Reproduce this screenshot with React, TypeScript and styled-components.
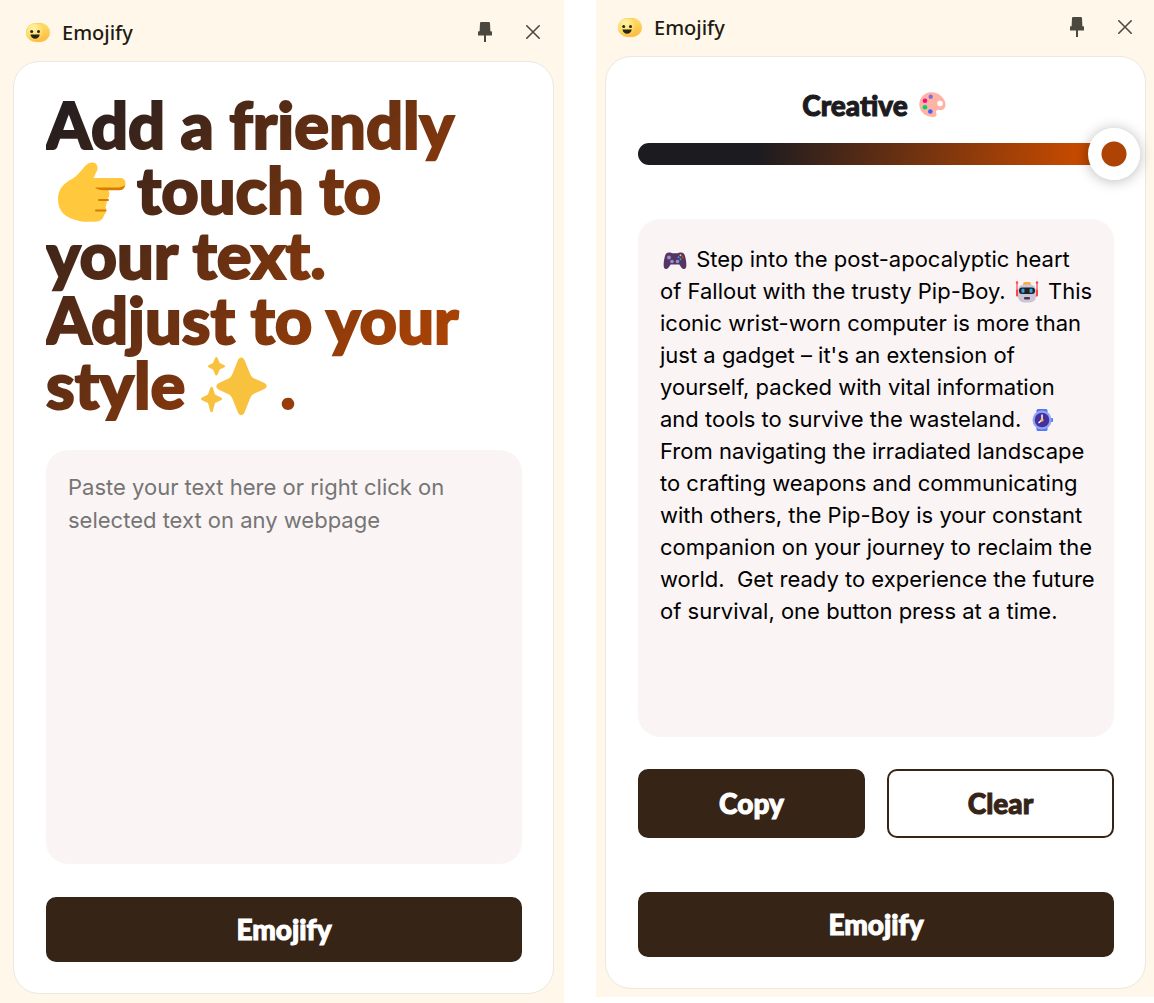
import React, { useState } from "react";
import styled, { createGlobalStyle } from "styled-components";

const display = `Lato, "Open Sans", sans-serif`;
const body = `Inter, "Liberation Sans", sans-serif`;
const chrome = `"Noto Sans", "Open Sans", sans-serif`;

const GlobalStyle = createGlobalStyle`
  *, *::before, *::after { box-sizing: border-box; }
  body { margin: 0; background: #ffffff; }
`;

const Page = styled.main`
  display: grid;
  grid-template-columns: 564fr 558fr;
  gap: 32px;
  min-height: 100vh;
`;

const Panel = styled.section<{ $side: "left" | "right" }>`
  display: flex;
  flex-direction: column;
  min-width: 0;
  background: #fff8ea;
  padding: ${(p) => (p.$side === "left" ? "5px 10px 9px 13px" : "0 8px 8px 9px")};
  margin-bottom: ${(p) => (p.$side === "left" ? "0" : "6px")};
`;

const Header = styled.header`
  display: flex;
  align-items: center;
  height: 56px;
  padding: 0 9px 0 13px;
`;

const AppName = styled.h2`
  flex: 1;
  margin: 0 0 0 12px;
  font: 500 20px/28px ${chrome};
  color: #1e1c12;
`;

const IconButton = styled.button`
  display: flex;
  align-items: center;
  justify-content: center;
  width: 24px;
  height: 28px;
  margin-left: 24px;
  padding: 0 0 2px;
  border: 0;
  background: none;
  cursor: pointer;
`;

const Card = styled.div`
  flex: 1;
  display: flex;
  flex-direction: column;
  padding: 32px 31px 31px 32px;
  border: 1px solid #ece8df;
  border-radius: 26px;
  background: #ffffff;
`;

const Headline = styled.h1`
  margin: -2px 0 29px;
  padding-bottom: 4px;
  font: 900 65px/65px ${display};
  color: transparent;
  background: linear-gradient(135deg, #1e1c20 0%, #c64a00 96%);
  background-clip: text;
  -webkit-background-clip: text;
  -webkit-text-stroke: 2px transparent;
`;

const HandIcon = styled.svg`
  width: 68px;
  height: 60px;
  margin: 0 11px 0 12px;
  vertical-align: -8px;
`;

const SparkleIcon = styled.svg`
  width: 66px;
  height: 59px;
  margin: 0 13px 0 16px;
  vertical-align: -7px;
`;

const TextInput = styled.textarea`
  flex: 1;
  display: block;
  width: 100%;
  min-height: 240px;
  padding: 21px 22px;
  border: 0;
  border-radius: 22px;
  background: #faf4f4;
  font: 400 22px/33px ${body};
  color: #000000;
  resize: none;
  &::placeholder { color: #757575; opacity: 1; }
`;

const Result = styled.output`
  flex: 1;
  display: block;
  margin-top: 54px;
  padding: 24px 18px 24px 22px;
  border-radius: 22px;
  background: #faf4f4;
  font: 400 22px/32px ${body};
  color: #000000;
  white-space: pre-wrap;
`;

const InlineIcon = styled.svg`
  width: 30px;
  height: 24px;
  vertical-align: -5px;
`;

const Button = styled.button<{ $outline?: boolean; $tall?: boolean }>`
  height: ${(p) => (p.$tall ? 69 : 65)}px;
  flex: ${(p) => (p.$tall ? "1 1 0" : "none")};
  padding: 0 16px 2px;
  border: 2px solid #362417;
  border-radius: 10px;
  background: ${(p) => (p.$outline ? "#ffffff" : "#362417")};
  color: ${(p) => (p.$outline ? "#362417" : "#ffffff")};
  font: 900 28px/32px ${display};
  -webkit-text-stroke: 1px currentColor;
  cursor: pointer;
`;

const Submit = styled(Button)<{ $gap: number }>`
  margin-top: ${(p) => p.$gap}px;
`;

const Actions = styled.div`
  display: flex;
  gap: 22px;
  margin-top: 32px;
`;

const ToneLabel = styled.label`
  display: flex;
  align-items: center;
  justify-content: center;
  gap: 11px;
  height: 34px;
  padding: 0 4px 2px 0;
  font: 900 28px/32px ${display};
  -webkit-text-stroke: 1px currentColor;
  color: #1c1b20;
`;

const Track = styled.div`
  display: flex;
  align-items: center;
  height: 22px;
  margin-top: 20px;
  border-radius: 11px;
  background: linear-gradient(98deg, #1c1b20 25%, #c64a00 92%, #a84204 97%);
`;

const Slider = styled.input`
  appearance: none;
  flex: none;
  width: calc(100% + 52px);
  height: 52px;
  margin: -15px -26px;
  background: transparent;
  cursor: pointer;
  &::-webkit-slider-thumb {
    appearance: none;
    width: 52px;
    height: 52px;
    border-radius: 50%;
    background: radial-gradient(circle, #ad4305 12px, #ad4305 12px, #ffffff 13px);
    box-shadow: 0 1px 14px rgba(0, 0, 0, 0.28);
  }
`;

function Logo() {
  return (
    <svg width="24" height="20" viewBox="0 0 24 20" aria-hidden="true">
      <defs>
        <radialGradient id="face" cx="0.4" cy="0.25" r="0.8">
          <stop offset="0" stopColor="#fff3a6" />
          <stop offset="0.6" stopColor="#ffdc63" />
          <stop offset="1" stopColor="#fdb43b" />
        </radialGradient>
      </defs>
      {[14.5, 12.8, 11.1, 9.4].map((cx) => (
        <circle key={cx} cx={cx} cy="9.5" r="9.3" fill="url(#face)" stroke="#f8c64d" strokeWidth="0.4" />
      ))}
      <circle cx="5.700" cy="8.500" r="1.500" fill="#26251b" />
      <circle cx="12.500" cy="8.500" r="1.500" fill="#26251b" />
      <path d="M4.500 11.500H13.700C13.500 14 11.500 15.800 9.100 15.800S4.700 14 4.500 11.500z" fill="#26251b" />
    </svg>
  );
}

function TitleBar() {
  return (
    <Header>
      <Logo />
      <AppName>Emojify</AppName>
      <IconButton aria-label="Pin">
        <svg width="14" height="20" viewBox="0 0 14 20" fill="#4b493f">
          <path d="M3.2 0h7.6c.7 0 1.100.4 1.200 1.100L12.400 9.300H13c.6 0 1 .4 1 1V13.500H8V20H6V13.500H0v-3.200c0-.6.4-1 1-1h.6L2 1.100C2.100.4 2.500 0 3.200 0z" />
        </svg>
      </IconButton>
      <IconButton aria-label="Close">
        <svg width="14" height="14" viewBox="0 0 14 14" stroke="#4b493f" strokeWidth="1.6" strokeLinecap="round">
          <path d="M.8.8l12.400 12.400M13.200.8L.8 13.200" />
        </svg>
      </IconButton>
    </Header>
  );
}

function Hand() {
  return (
    <HandIcon viewBox="0 0 68 60" role="img" aria-label="pointing right">
      <path
        fill="#ffc83d"
        d="M14 17c5-3 9-8 13-13 4-4 9-4.500 11.500-1.500 2 3 1 5.500-.5 8L35.500 16H62c3.500 0 5.500 2 5.500 5.500 0 4-2 6.500-6 6.500H50c1.800 2 2 6-.5 9-.8 3-1 6-2 8 1 1.500 1.300 5.500-1.500 8-1 4-3 6-7 6.500-5 .6-12 .5-17.500-.5C8 56.500 0 50 0 37c0-10 6-16 14-20z"
      />
      <path fill="none" stroke="#d67d00" strokeWidth="2" strokeLinecap="round" d="M41 38h9M38 48.500h9.500" />
      <path fill="#d67d00" d="M37 25.500H58c4 0 7-.5 9.200-2.500-.7 3.500-3 5.300-6.200 5.300H46c-4 0-7-1-9-2.800z" />
    </HandIcon>
  );
}

function Sparkles() {
  return (
    <SparkleIcon viewBox="0 0 66 59" fill="#f8c23e" role="img" aria-label="sparkles">
      <path d="M37 3c1.500-3.500 5-3.500 6.500 0l5.500 13.500c1.200 3 2.300 4.200 5 5.200l9 4.100c3.500 1.600 3.500 5 0 6.500l-9 4c-2.700 1.200-3.800 2.400-5 5.300L43.500 55.500c-1.500 3.500-5 3.500-6.500 0L31.500 42c-1.200-3-2.300-4.200-5-5.300l-8.500-4c-3.500-1.500-3.500-5 0-6.600l8.500-4c2.700-1.200 3.800-2.400 5-5.400z" />
      <path d="M14 1.200c.8-1.600 2-1.600 2.700 0l2 4.800 4.300 2c1.500.8 1.500 1.900 0 2.600l-4.300 2-2 4.700c-.7 1.600-1.900 1.600-2.700 0l-2-4.700L8 10.600c-1.500-.7-1.500-1.800 0-2.600l4-2z" />
      <path d="M9.200 31c.8-1.600 2-1.600 2.700 0L14 37.500l6 3c1.500.8 1.500 2 0 2.700L14 46l-2.100 8c-.7 1.600-1.900 1.600-2.700 0L7 46l-6-2.800c-1.300-.7-1.300-1.900 0-2.700l6-3z" />
    </SparkleIcon>
  );
}

function Palette() {
  return (
    <svg width="27" height="26" viewBox="0 0 27 26" role="img" aria-label="palette">
      <path
        fill="#ffb3a4"
        d="M12 .2C20 0 26.500 6.500 26.500 12.500c0 4-2.500 6-6 5.600-2.800-.3-4.500.7-3.300 3 1 2.300-.2 4.200-2.900 4C6.500 25 .3 19.500.3 12.500.3 5.500 5.500.4 12 .2z"
      />
      <circle cx="21" cy="11.500" r="2.800" fill="#fff" />
      <circle cx="11.700" cy="4.800" r="2.200" fill="#8b6bd0" />
      <circle cx="6" cy="8.800" r="2.300" fill="#f70a8d" />
      <circle cx="6" cy="15.300" r="2.300" fill="#00d26a" />
      <circle cx="11.300" cy="19.500" r="2.300" fill="#3f5fff" />
    </svg>
  );
}

function Gamepad() {
  return (
    <InlineIcon viewBox="0 0 30 24" role="img" aria-label="video game">
      <path
        fill="#533566"
        d="M9 4.500c1.800 0 2.500.7 3.500.7h5c1 0 1.700-.7 3.500-.7 2.500 0 3.300 1.200 4 3.500 1 3.400 1.500 7 1.300 10-.1 2-1 3-2.300 3-2.300 0-3.200-2.600-4.700-4.500h-8.600C9.200 18.400 8.300 21 6 21c-1.300 0-2.200-1-2.300-3C3.500 15 4 11.400 5 8c.7-2.300 1.500-3.500 4-3.500z"
      />
      <circle cx="9" cy="9.500" r="1.900" fill="#998ec9" />
      <circle cx="12" cy="13.500" r="1.800" fill="#998ec9" />
      <circle cx="17.500" cy="13.500" r="1.800" fill="#998ec9" />
      <circle cx="20.500" cy="7.300" r="1" fill="#f9c23c" />
      <circle cx="18.500" cy="9.300" r="1" fill="#3f8fff" />
      <circle cx="22.500" cy="9.300" r="1" fill="#f8312f" />
      <circle cx="20.500" cy="11.300" r="1" fill="#00d26a" />
    </InlineIcon>
  );
}

function Robot() {
  return (
    <InlineIcon viewBox="0 0 30 24" role="img" aria-label="robot">
      <path stroke="#f8454d" strokeWidth="1.200" d="M5 3v11M25 3v11" />
      <circle cx="5" cy="2.500" r="1.200" fill="#f8454d" />
      <circle cx="25" cy="2.500" r="1.200" fill="#f8454d" />
      <rect x="4" y="9.500" width="3" height="7" rx="1" fill="#f8454d" />
      <rect x="23" y="9.500" width="3" height="7" rx="1" fill="#f8454d" />
      <rect x="11" y="2" width="8" height="4" rx="2" fill="#f9ad3c" />
      <rect x="6" y="4.500" width="18" height="18" rx="6" fill="#cdc4d6" />
      <rect x="7" y="7.500" width="16" height="6.500" rx="3" fill="#212121" />
      <rect x="9.500" y="8.700" width="3" height="4" rx="1" fill="#26a9ee" />
      <rect x="17.500" y="8.700" width="3" height="4" rx="1" fill="#26a9ee" />
      <rect x="12" y="17" width="6" height="2.500" rx="1" fill="#433b4b" />
    </InlineIcon>
  );
}

function Watch() {
  return (
    <InlineIcon viewBox="0 0 30 24" role="img" aria-label="watch">
      <rect x="9.500" y="1" width="11" height="22" rx="1.500" fill="#5577f7" />
      <rect x="23" y="10" width="3" height="4" rx="1" fill="#5577f7" />
      <circle cx="15" cy="12" r="9.500" fill="#8fa4f4" />
      <circle cx="15" cy="12" r="7.300" fill="#46309b" />
      <path d="M15 6.500V12l-3.500 3" fill="none" stroke="#fff" strokeWidth="1.500" />
      <circle cx="15" cy="12" r="1.600" fill="#f9c23c" />
    </InlineIcon>
  );
}

export default function App() {
  const [text, setText] = useState("");
  const [tone, setTone] = useState(100);

  return (
    <>
      <GlobalStyle />
      <Page>
        <Panel $side="left">
          <TitleBar />
          <Card>
            <Headline>
              Add a friendly
              <br />
              <Hand />
              touch to
              <br />
              your text.
              <br />
              Adjust to your
              <br />
              style
              <Sparkles />.
            </Headline>
            <TextInput
              aria-label="Text to emojify"
              placeholder="Paste your text here or right click on selected text on any webpage"
              value={text}
              onChange={(e) => setText(e.target.value)}
            />
            <Submit $gap={33}>Emojify</Submit>
          </Card>
        </Panel>

        <Panel $side="right">
          <TitleBar />
          <Card>
            <ToneLabel htmlFor="tone">
              Creative <Palette />
            </ToneLabel>
            <Track>
              <Slider
                id="tone"
                type="range"
                min={0}
                max={100}
                value={tone}
                onChange={(e) => setTone(Number(e.target.value))}
              />
            </Track>
            <Result>
              <Gamepad /> Step into the post-apocalyptic heart of Fallout with the trusty Pip-Boy.{" "}
              <Robot /> This iconic wrist-worn computer is more than just a gadget – it's an extension
              of yourself, packed with vital information and tools to survive the wasteland. <Watch />{" "}
              From navigating the irradiated landscape to crafting weapons and communicating with
              others, the Pip-Boy is your constant companion on your journey to reclaim the world.
              {"  "}Get ready to experience the future of survival, one button press at a time.
            </Result>
            <Actions>
              <Button $tall>Copy</Button>
              <Button $tall $outline>
                Clear
              </Button>
            </Actions>
            <Submit $gap={54}>Emojify</Submit>
          </Card>
        </Panel>
      </Page>
    </>
  );
}
